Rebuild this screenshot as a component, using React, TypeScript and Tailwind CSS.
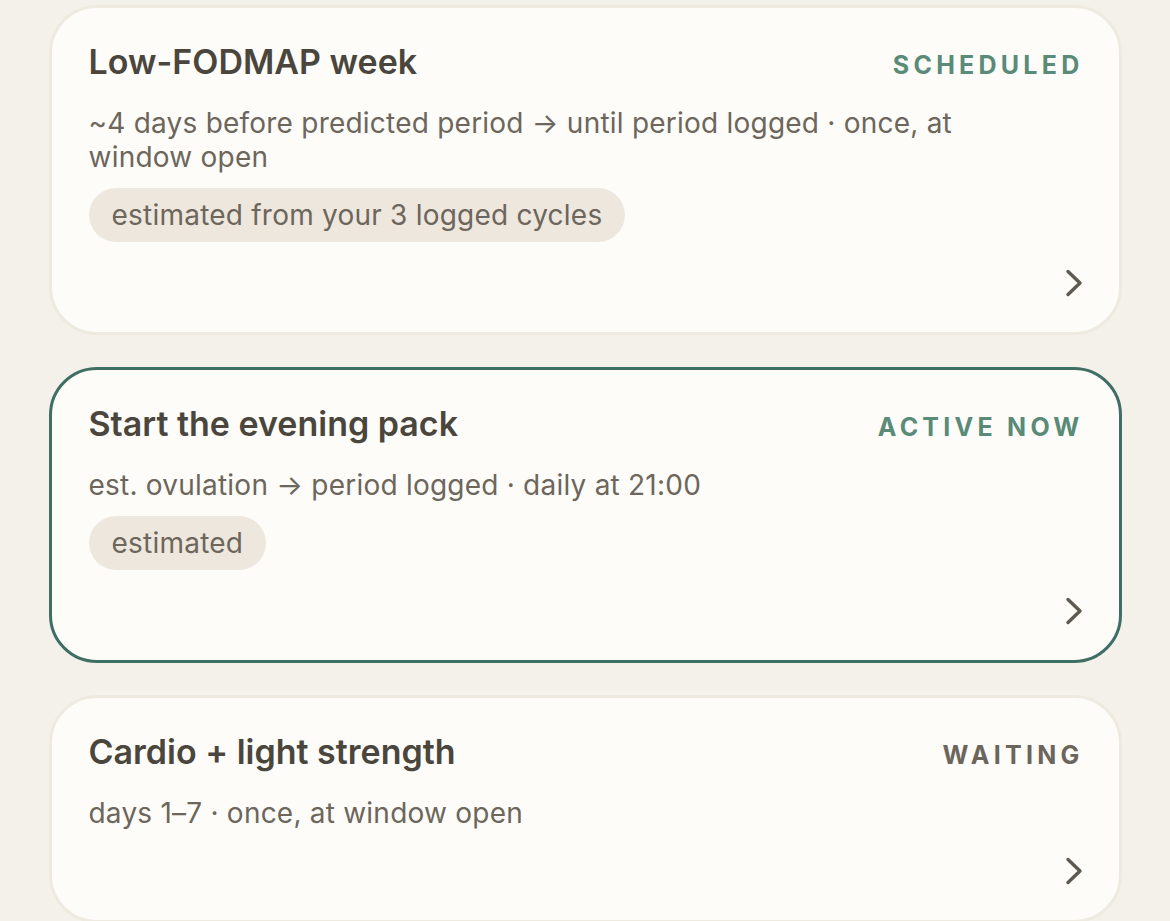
type Plan = {
  title: string
  window: string
  status: string
  tone: 'green' | 'muted'
  active?: boolean
  note?: string
}

const plans: Plan[] = [
  {
    title: 'Low-FODMAP week',
    window: '~4 days before predicted period → until period logged · once, at window open',
    status: 'Scheduled',
    tone: 'green',
    note: 'estimated from your 3 logged cycles',
  },
  {
    title: 'Start the evening pack',
    window: 'est. ovulation → period logged · daily at 21:00',
    status: 'Active now',
    tone: 'green',
    active: true,
    note: 'estimated',
  },
  {
    title: 'Cardio + light strength',
    window: 'days 1–7 · once, at window open',
    status: 'Waiting',
    tone: 'muted',
  },
]

function Chevron() {
  return (
    <svg width="20" height="30" viewBox="0 0 20 30" fill="none" className="-mr-[4px] text-[#5f5a51]">
      <path d="M4 3.5 L16 15 L4 26.5" stroke="currentColor" strokeWidth="3.4" strokeLinecap="round" strokeLinejoin="round" />
    </svg>
  )
}

function PlanCard({ plan }: { plan: Plan }) {
  return (
    <div
      className={
        'flex flex-col rounded-[48px] border-[3px] bg-[#fdfcf8] pb-[34px] pl-[37px] pr-[39px] pt-[34px] ' +
        (plan.active ? 'border-[#3f6e65]' : 'border-[#efeae0]')
      }
    >
      <div className="flex items-start justify-between gap-6">
        <h3 className="text-[34px] font-semibold leading-[40px] text-[#4b463d]">{plan.title}</h3>
        <span
          className={
            '-mr-[4px] pt-[3px] text-[25px] font-bold uppercase leading-[40px] tracking-[0.17em] ' +
            (plan.tone === 'green' ? 'text-[#5a8a78]' : 'text-[#6b655b]')
          }
        >
          {plan.status}
        </span>
      </div>
      <p className="mt-[21px] max-w-[890px] text-[28px] leading-[34px] tracking-[0.008em] text-[#6c665c]">
        {plan.window}
      </p>
      {plan.note && (
        <div className="mt-[14px] flex">
          <span className="rounded-full bg-[#eee7de] px-[23px] py-[10px] text-[28px] leading-[34px] tracking-[0.008em] text-[#6c665c]">
            {plan.note}
          </span>
        </div>
      )}
      <div className="mt-[26px] flex justify-end">
        <Chevron />
      </div>
    </div>
  )
}

export default function App() {
  return (
    <div
      className="min-h-screen bg-[#f4f1ea] px-[48px] pt-[5px]"
      style={{ fontFamily: 'Inter, "Noto Sans", sans-serif' }}
    >
      <div className="mx-auto flex w-[1073px] flex-col gap-[32px]">
        {plans.map((p) => (
          <PlanCard key={p.title} plan={p} />
        ))}
      </div>
    </div>
  )
}
